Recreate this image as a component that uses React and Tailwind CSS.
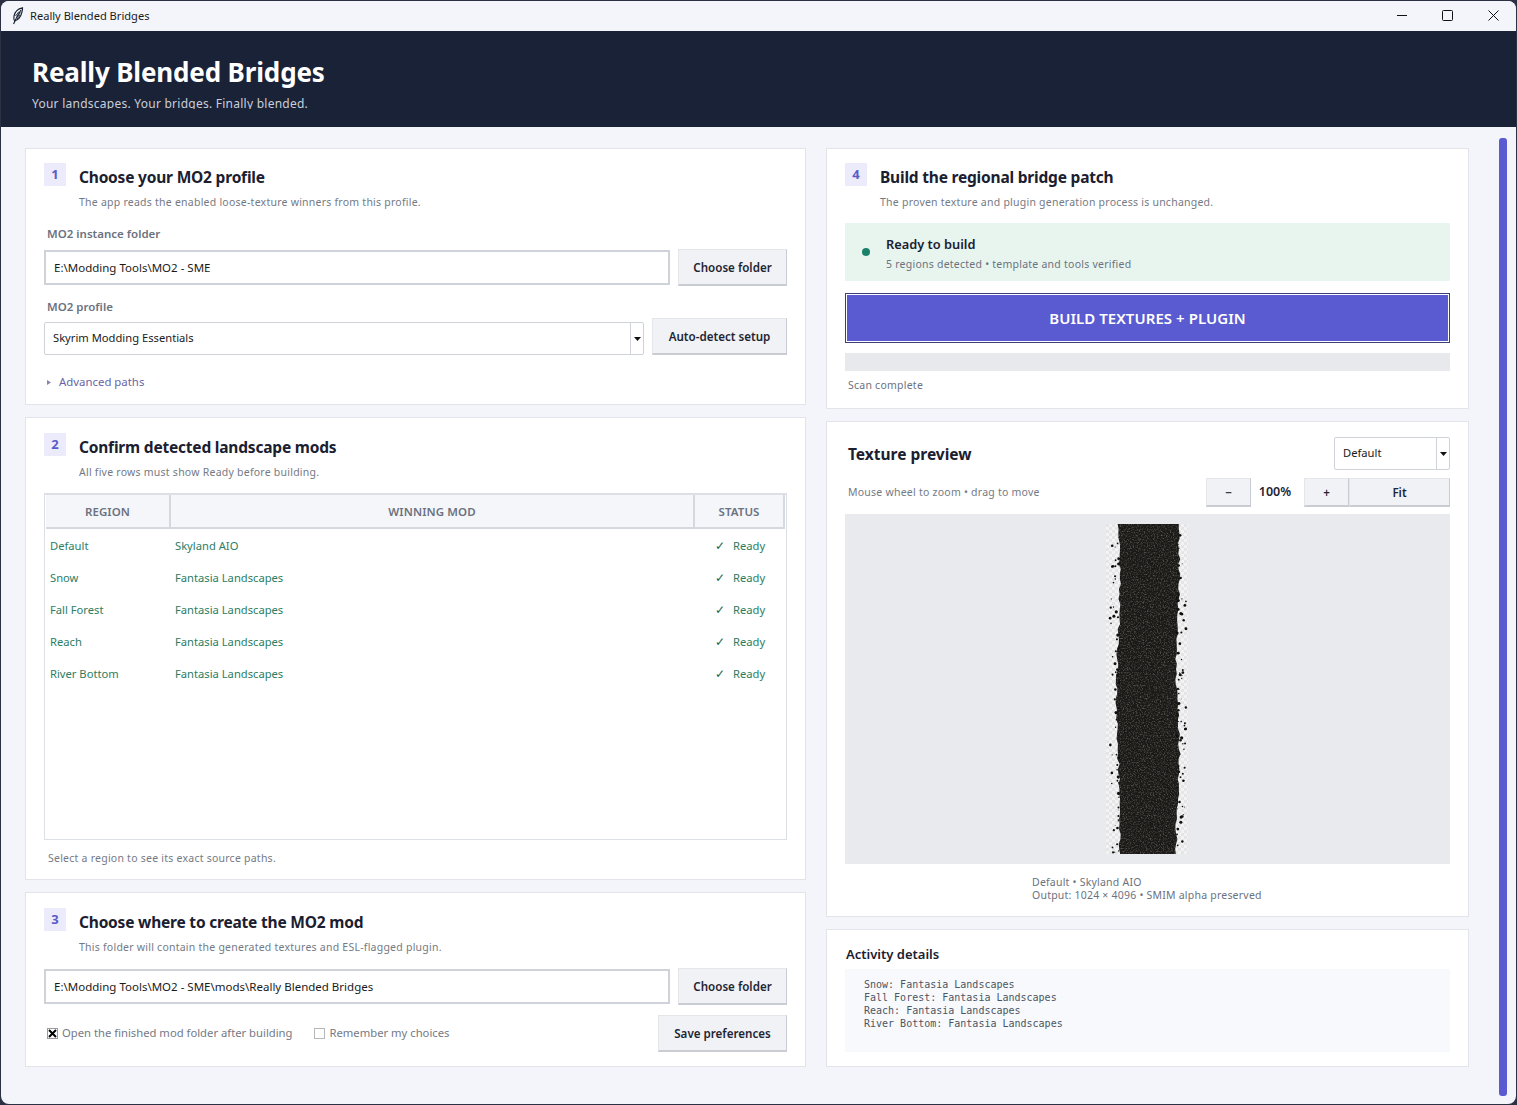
import React from "react";

function rng(seed) {
  let s = seed;
  return () => {
    s = (s * 1664525 + 1013904223) % 4294967296;
    return s / 4294967296;
  };
}

function Texture() {
  const r = rng(42);
  const left = [];
  const right = [];
  for (let y = 0; y <= 330; y += 5) {
    left.push([11 + r() * 2.4 + 1.6 * Math.sin(y / 37), y]);
    right.push([73 - r() * 2.4 + 1.6 * Math.sin(y / 29), y]);
  }
  const pts = [...left, ...right.reverse()].map((p) => p.join(",")).join(" ");
  const dots = [];
  for (let i = 0; i < 150; i++) {
    const side = r() > 0.5;
    const d = Math.pow(r(), 1.6) * 9;
    dots.push({
      x: side ? 71 + d : 13 - d,
      y: r() * 330,
      s: 0.4 + r() * 1.2,
    });
  }
  return (
    <svg width="82" height="330" viewBox="0 0 82 330" className="block">
      <defs>
        <pattern id="chk" width="6" height="6" patternUnits="userSpaceOnUse">
          <rect width="6" height="6" fill="#f3f3f4" />
          <rect width="3" height="3" fill="#e5e5e7" />
          <rect x="3" y="3" width="3" height="3" fill="#e5e5e7" />
        </pattern>
        <clipPath id="road">
          <polygon points={pts} />
        </clipPath>
        <filter id="grain" x="0" y="0" width="100%" height="100%">
          <feTurbulence type="fractalNoise" baseFrequency="0.7" numOctaves="3" seed="7" />
          <feColorMatrix values="0 0 0 0 0.32  0 0 0 0 0.30  0 0 0 0 0.25  1.3 0 0 0 -0.6" />
        </filter>
      </defs>
      <rect width="82" height="330" fill="url(#chk)" />
      <polygon points={pts} fill="#1a1917" />
      <g clipPath="url(#road)">
        <rect width="82" height="330" filter="url(#grain)" />
      </g>
      {dots.map((d, i) => (
        <circle key={i} cx={d.x} cy={d.y} r={d.s} fill="#0f0f0e" />
      ))}
    </svg>
  );
}

function Card({ className = "", children }) {
  return <section className={"bg-white border border-[#e2e4ea] " + className}>{children}</section>;
}

function StepHead({ n, title, sub }) {
  return (
    <div className="flex">
      <div className="w-[22px] h-[23px] bg-[#ecebfb] text-[#5b5bc8] text-[13px] font-bold flex items-center justify-center leading-none">
        {n}
      </div>
      <div className="ml-[13px]">
        <h2 className="text-[15.5px] leading-[22px] mt-[3px] font-bold text-[#1a2030] tracking-[-0.2px]">{title}</h2>
        <p className="text-[10.5px] leading-[14px] mt-[7px] text-[#747a85] tracking-[0.24px]">{sub}</p>
      </div>
    </div>
  );
}

function Btn({ className = "", children }) {
  return (
    <div className={"bg-[#f0f2f5] border border-[#e4e6ea] border-r-[#c9ccd2] border-b-2 border-b-[#c9ccd2] text-[#1f2533] text-[11.6px] font-semibold flex items-center justify-center shrink-0 pt-px " + className}>
      {children}
    </div>
  );
}

function TextInput({ value }) {
  return (
    <div className="flex-1 h-[35px] border-2 border-[#cfd3d9] bg-white flex items-center pl-2 text-[11.5px] text-[#1a1a1a]">
      {value}
    </div>
  );
}

function SelectBox({ value, className = "" }) {
  return (
    <div className={"h-[33px] border border-[#cfd2d8] rounded-[2px] bg-white flex items-center text-[#1a1a1a] text-[11.2px] " + className}>
      <span className="flex-1 pl-2">{value}</span>
      <span className="w-[13px] h-full border-l border-[#cfd2d8] flex items-center justify-center">
        <svg width="7" height="4" viewBox="0 0 7 4"><path d="M0 0h7L3.5 4z" fill="#111" /></svg>
      </span>
    </div>
  );
}

const rows = [
  ["Default", "Skyland AIO"],
  ["Snow", "Fantasia Landscapes"],
  ["Fall Forest", "Fantasia Landscapes"],
  ["Reach", "Fantasia Landscapes"],
  ["River Bottom", "Fantasia Landscapes"],
];

function Th({ children, className = "" }) {
  return (
    <div className={"h-[34px] bg-[#f5f6f9] border-r-2 border-b-2 border-[#d5d8dd] flex items-center justify-center pt-[2px] text-[11.5px] font-semibold text-[#6b7280] tracking-[0.1px] " + className}>
      {children}
    </div>
  );
}

export default function App() {
  return (
    <div className="w-[1517px] h-[1105px] overflow-hidden bg-[#2b3043] px-px pt-px pb-px" style={{ fontFamily: '"Noto Sans", "Open Sans", sans-serif' }}>
      <div className="h-full w-full bg-[#f4f5fb] rounded-t-lg rounded-b-lg overflow-hidden flex flex-col">
        {/* title bar */}
        <div className="h-[30px] shrink-0 bg-[#f3f5fb] flex items-center pl-[11px] pr-[17px] text-[#1a1a1a]">
          <svg width="12" height="18" viewBox="0 0 12 18" className="-mt-[1px]">
            <path d="M10.5 0.8C6 1.6 2.8 5 2 9.2 1.6 11.6 2 13 2.6 13.8 6 13 8.8 9.6 9.8 5.6 10.3 3.6 10.6 2 10.5 0.8Z" fill="#fff" stroke="#1b2436" strokeWidth="1.2" />
            <path d="M9 3C6.5 6.5 3.5 12 1.6 17" fill="none" stroke="#1b2436" strokeWidth="1.2" />
            <path d="M7 4.5 3.5 9M8.5 5.5 4.5 11M8 8 5 12" fill="none" stroke="#1b2436" strokeWidth="0.9" />
          </svg>
          <span className="ml-[6px] text-[11.1px] leading-none -mt-[1px]">Really Blended Bridges</span>
          <div className="ml-auto flex items-center gap-[35px] -mt-[2px]">
            <svg width="10" height="10" viewBox="0 0 10 10"><path d="M0 5.5h10" stroke="#111" strokeWidth="1" /></svg>
            <svg width="11" height="11" viewBox="0 0 11 11"><rect x="0.5" y="0.5" width="10" height="10" rx="1" fill="none" stroke="#111" strokeWidth="1" /></svg>
            <svg width="11" height="11" viewBox="0 0 11 11"><path d="M0.5 0.5l10 10M10.5 0.5l-10 10" stroke="#111" strokeWidth="1" /></svg>
          </div>
        </div>

        {/* header */}
        <header className="h-[96px] shrink-0 bg-[#1a2238] pl-[31px] pt-[22px]">
          <h1 className="text-[26px] leading-[38px] font-bold text-white tracking-[-0.15px]">Really Blended Bridges</h1>
          <div className="mt-[4px] h-[14px] overflow-hidden text-[12px] leading-[17px] text-[#c9cedb] tracking-[0.25px]">
            Your landscapes. Your bridges. Finally blended.
          </div>
        </header>

        {/* body */}
        <div className="flex-1 flex min-h-0">
          <main className="flex gap-[20px] pl-[24px] pt-[21px]">
            {/* left */}
            <div className="w-[781px] flex flex-col gap-[12px]">
              <Card className="h-[257px] pl-[18px] pr-[18px] pt-[14px]">
                <StepHead n="1" title="Choose your MO2 profile" sub="The app reads the enabled loose-texture winners from this profile." />
                <div className="mt-[17px] ml-[3px] h-[16px] text-[11.5px] leading-[16px] font-semibold text-[#6b7280]">MO2 instance folder</div>
                <div className="mt-[7px] flex items-center gap-[8px]">
                  <TextInput value="E:\Modding Tools\MO2 - SME" />
                  <Btn className="w-[109px] h-[37px]">Choose folder</Btn>
                </div>
                <div className="mt-[13px] ml-[3px] h-[16px] text-[11.5px] leading-[16px] font-semibold text-[#6b7280]">MO2 profile</div>
                <div className="mt-[3px] flex items-end gap-[8px]">
                  <SelectBox value="Skyrim Modding Essentials" className="flex-1" />
                  <Btn className="w-[135px] h-[37px]">Auto-detect setup</Btn>
                </div>
                <div className="mt-[19px] ml-[3px] flex items-center text-[11.4px] leading-[16px] text-[#6a64a4]">
                  <svg width="4" height="5" viewBox="0 0 4 5" className="mr-[8px]"><path d="M0 0l4 2.5L0 5z" fill="#8a86a8" /></svg>
                  Advanced paths
                </div>
              </Card>

              <Card className="h-[463px] pl-[18px] pr-[18px] pt-[15px]">
                <StepHead n="2" title="Confirm detected landscape mods" sub="All five rows must show Ready before building." />
                <div className="mt-[14px] h-[347px] border-2 border-[#dcdfe4] border-b border-l border-r">
                  <div className="grid grid-cols-[125px_524px_90px] pl-px">
                    <Th>REGION</Th>
                    <Th>WINNING MOD</Th>
                    <Th>STATUS</Th>
                  </div>
                  <div className="pt-px">
                    {rows.map(([a, b]) => (
                      <div key={a} className="grid grid-cols-[125px_524px_90px] h-[32px] items-center text-[11.2px] text-[#2c7d64] pl-[5px]">
                        <span>{a}</span>
                        <span>{b}</span>
                        <span className="pl-[16px] flex items-center gap-[8px]">
                          <span className="text-[12px] text-[#1f6b52] leading-none">✓</span>Ready
                        </span>
                      </div>
                    ))}
                  </div>
                </div>
                <div className="mt-[11px] ml-[4px] text-[10.5px] leading-[14px] text-[#747a85] tracking-[0.24px]">Select a region to see its exact source paths.</div>
              </Card>

              <Card className="h-[175px] pl-[18px] pr-[18px] pt-[15px]">
                <StepHead n="3" title="Choose where to create the MO2 mod" sub="This folder will contain the generated textures and ESL-flagged plugin." />
                <div className="mt-[14px] flex items-center gap-[8px]">
                  <TextInput value="E:\Modding Tools\MO2 - SME\mods\Really Blended Bridges" />
                  <Btn className="w-[109px] h-[37px]">Choose folder</Btn>
                </div>
                <div className="mt-[10px] flex items-center">
                  <div className="w-[11px] h-[11px] ml-[3px] border border-[#9a9a9a] flex items-center justify-center bg-white">
                    <svg width="9" height="9" viewBox="0 0 9 9"><path d="M1 1l7 7M8 1L1 8" stroke="#000" strokeWidth="2" /></svg>
                  </div>
                  <span className="ml-[4px] text-[11.25px] text-[#747a85]">Open the finished mod folder after building</span>
                  <div className="w-[11px] h-[11px] ml-[22px] border border-[#b5b7bb] bg-white" />
                  <span className="ml-[4px] text-[11.25px] text-[#747a85]">Remember my choices</span>
                  <Btn className="w-[129px] h-[37px] ml-auto">Save preferences</Btn>
                </div>
              </Card>
            </div>

            {/* right */}
            <div className="w-[643px] flex flex-col gap-[12px]">
              <Card className="h-[261px] pl-[18px] pr-[18px] pt-[14px]">
                <StepHead n="4" title="Build the regional bridge patch" sub="The proven texture and plugin generation process is unchanged." />
                <div className="mt-[14px] h-[58px] bg-[#e8f5ef] flex items-center pl-[17px] rounded-[1px]">
                  <span className="w-[8px] h-[8px] rounded-full bg-[#1b8269] shrink-0" />
                  <div className="ml-[16px] pt-[3px]">
                    <div className="text-[12.8px] leading-[16px] font-semibold text-[#1a2030]">Ready to build</div>
                    <div className="text-[10.5px] leading-[14px] mt-[5px] text-[#6b7280] tracking-[0.24px]">5 regions detected • template and tools verified</div>
                  </div>
                </div>
                <div className="mt-[12px] h-[50px] bg-[#5a5ad1] border border-[#3d3f78] flex items-center justify-center outline outline-1 -outline-offset-2 outline-white text-white font-semibold text-[15px] tracking-[0.05px]">
                  BUILD TEXTURES + PLUGIN
                </div>
                <div className="mt-[10px] h-[18px] bg-[#e8e9ed]" />
                <div className="mt-[7px] ml-[3px] text-[10.5px] leading-[14px] text-[#6b7280] tracking-[0.24px]">Scan complete</div>
              </Card>

              <Card className="h-[496px] pl-[18px] pr-[18px] pt-[15px]">
                <div className="flex items-center justify-between">
                  <h2 className="ml-[3px] text-[15.5px] font-bold text-[#1a2030] leading-[22px]">Texture preview</h2>
                  <SelectBox value="Default" className="w-[116px]" />
                </div>
                <div className="mt-[8px] h-[29px] flex items-center">
                  <span className="ml-[3px] pt-px text-[10.5px] text-[#747a85] tracking-[0.24px]">Mouse wheel to zoom • drag to move</span>
                  <div className="ml-auto flex items-center">
                    <Btn className="w-[45px] h-[29px]">−</Btn>
                    <span className="w-[53px] pr-[5px] text-center text-[12.5px] font-semibold text-[#1f2533]">100%</span>
                    <Btn className="w-[45px] h-[29px]">+</Btn>
                    <Btn className="w-[101px] h-[29px]">Fit</Btn>
                  </div>
                </div>
                <div className="mt-[7px] h-[350px] bg-[#e9eaed] flex items-center justify-center">
                  <div className="-ml-[1px]"><Texture /></div>
                </div>
                <div className="mt-[12px] ml-[187px] text-[10.5px] leading-[13px] text-[#6b7280] tracking-[0.22px]">
                  <div>Default • Skyland AIO</div>
                  <div>Output: 1024 × 4096 • SMIM alpha preserved</div>
                </div>
              </Card>

              <Card className="h-[138px] pl-[18px] pr-[18px] pt-[15px]">
                <h3 className="ml-px text-[13px] leading-[18px] font-semibold text-[#1a2030]">Activity details</h3>
                <div className="mt-[6px] h-[83px] bg-[#f8f9fc] pl-[19px] pt-[9px]">
                  <pre className="text-[10px] leading-[13px] text-[#4b5563]" style={{ fontFamily: '"DejaVu Sans Mono", monospace' }}>
{`Snow: Fantasia Landscapes
Fall Forest: Fantasia Landscapes
Reach: Fantasia Landscapes
River Bottom: Fantasia Landscapes`}
                  </pre>
                </div>
              </Card>
            </div>
          </main>

          {/* scrollbar */}
          <div className="ml-[30px] mt-[11px] mb-[8px] w-[8px] rounded-[3px] bg-[#5a5ad1]" />
        </div>
      </div>
    </div>
  );
}
